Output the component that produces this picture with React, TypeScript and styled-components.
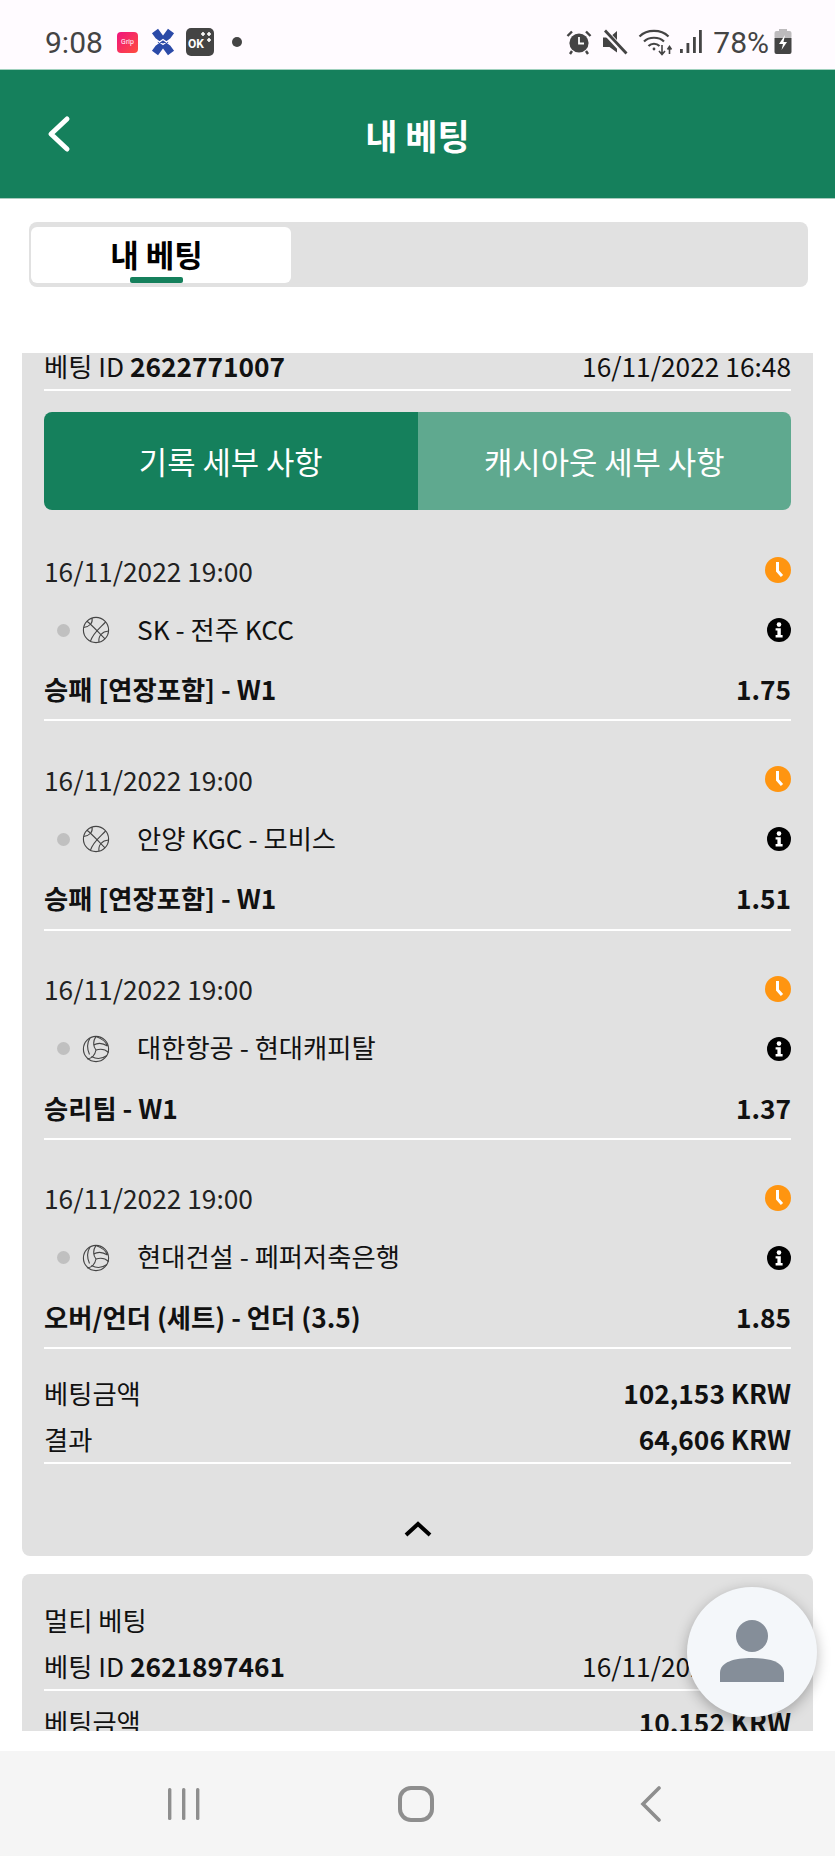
import React from 'react';
import styled, { createGlobalStyle } from 'styled-components';

const GlobalStyle = createGlobalStyle`
    html, body {
        margin: 0;
        padding: 0;
        background: #fff;
    }
    body {
        font-family: 'Noto Sans CJK KR', 'Noto Sans', sans-serif;
        color: #111;
    }
`;

const GREEN = '#15805c';

interface Selection {
    date: string;
    sport: 'basketball' | 'volleyball';
    teams: string;
    market: string;
    odds: string;
}

const SELECTIONS: Selection[] = [
    { date: '16/11/2022 19:00', sport: 'basketball', teams: 'SK - 전주 KCC', market: '승패 [연장포함] - W1', odds: '1.75' },
    { date: '16/11/2022 19:00', sport: 'basketball', teams: '안양 KGC - 모비스', market: '승패 [연장포함] - W1', odds: '1.51' },
    { date: '16/11/2022 19:00', sport: 'volleyball', teams: '대한항공 - 현대캐피탈', market: '승리팀 - W1', odds: '1.37' },
    { date: '16/11/2022 19:00', sport: 'volleyball', teams: '현대건설 - 페퍼저축은행', market: '오버/언더 (세트) - 언더 (3.5)', odds: '1.85' },
];

const Basketball = () => (
    <svg width="28" height="28" viewBox="0 0 28 28" fill="none" stroke="#444" strokeWidth="1.1">
        <circle cx="14" cy="14" r="12.6" />
        <path d="M5 5.2 C11 10 17 17 23 22.8" />
        <path d="M23.6 6 C18 12 11 17 8.5 25.2" />
        <path d="M10 2 C11 7 8 10.5 1.6 11.5" />
        <path d="M26.6 15 C20 15.5 16 20 17 26.4" />
    </svg>
);

const Volleyball = () => (
    <svg width="28" height="28" viewBox="0 0 28 28" fill="none" stroke="#444" strokeWidth="1.1">
        <circle cx="14" cy="14" r="12.6" />
        <path d="M14 15 C11 11 11 6 14 1.4" />
        <path d="M14 15 C19 13.5 23.5 14.5 26.6 17.5" />
        <path d="M14 15 C13 20 9.5 23.5 5 24" />
        <path d="M8 3 C5 8 5 14 7.5 19.5" />
        <path d="M14 1.4 C19 3 24 7 25.5 11" />
        <path d="M11.5 10 C16 7.5 21 8 25.5 11" />
        <path d="M25 20.5 C20 24 14 24 9.5 21.5" />
    </svg>
);

const ClockBadge = () => (
    <svg width="26" height="26" viewBox="0 0 26 26">
        <circle cx="13" cy="13" r="13" fill="#ff9510" />
        <path d="M12.5 5 V14 L17 19" fill="none" stroke="#fff" strokeWidth="3" />
    </svg>
);

const InfoBadge = () => (
    <svg width="24" height="24" viewBox="0 0 24 24">
        <circle cx="12" cy="12" r="12" fill="#000" />
        <circle cx="12" cy="6.6" r="2.3" fill="#fff" />
        <path d="M8.6 10.2 H13.8 V17 H15.6 V19.4 H8.6 V17 H10.4 V12.6 H8.6 Z" fill="#fff" />
    </svg>
);

const Alarm = () => (
    <svg width="26" height="26" viewBox="0 0 26 26">
        <circle cx="13" cy="14" r="9.6" fill="#444" />
        <path d="M1.5 7 L6 2.5 M24.5 7 L20 2.5 M6 22 L4 25 M20 22 L22 25" stroke="#444" strokeWidth="2.4" fill="none" />
        <path d="M13 8 V14.5 H18" stroke="#fff" strokeWidth="1.8" fill="none" />
    </svg>
);

const Mute = () => (
    <svg width="26" height="26" viewBox="0 0 26 26">
        <path d="M1 8.5 H7.5 L15 2 V23.5 L7.5 18 H1 Z" fill="#444" />
        <path d="M2 1.5 L25 26" stroke="#fffbff" strokeWidth="6" />
        <path d="M3 1.5 L24.5 24.5" stroke="#444" strokeWidth="2.8" />
    </svg>
);

const Wifi = () => (
    <svg width="36" height="28" viewBox="0 0 36 28" fill="none" stroke="#444" strokeWidth="2.2">
        <path d="M1.5 8.5 C9 1 23 1 30.5 8.5" />
        <path d="M6 13.5 C11 8.5 21 8.5 26 13.5" />
        <path d="M10.5 18 C13.5 15 18.5 15 21.5 18" />
        <circle cx="16" cy="21" r="1.4" fill="#444" stroke="none" />
        <path d="M24 17 V26 M21 23 L24 26.5 L27 23 M31.5 26 V19 M29.5 21.5 L31.5 18.5 L33.5 21.5" strokeWidth="1.6" />
    </svg>
);

const Signal = () => (
    <svg width="24" height="26" viewBox="0 0 24 26" fill="#444">
        <rect x="1" y="20" width="2.8" height="4" />
        <rect x="7.5" y="14" width="2.8" height="10" />
        <rect x="14" y="8" width="2.8" height="16" />
        <rect x="20" y="1" width="2.8" height="23" />
    </svg>
);

const Battery = () => (
    <svg width="18" height="26" viewBox="0 0 18 26">
        <rect x="5" y="0" width="8" height="3" fill="#bdbbbd" />
        <rect x="0.5" y="2" width="17" height="8" rx="2" fill="#bdbbbd" />
        <path d="M0.5 9 H17.5 V23 Q17.5 25 15.5 25 H2.5 Q0.5 25 0.5 23 Z" fill="#444" />
        <path d="M11 6 L5 15 H9 L7.5 21 L13 13 H9.5 Z" fill="#fff" />
    </svg>
);

const App: React.FC = () => {
    return (
        <Page>
            <GlobalStyle />
            <StatusBar>
                <StatusSide>
                    <Clock>9:08</Clock>
                    <GripLogo>Grip</GripLogo>
                    <AppMark>
                        <svg width="24" height="28" viewBox="0 0 24 28">
                            <path d="M4 3 L20 25 M20 3 L4 25" stroke="#2b4aa8" strokeWidth="7.5" fill="none" />
                            <path d="M4.5 11 L12 16.5 L19.5 11 M4.5 17 L12 11.5 L19.5 17" stroke="#fffbff" strokeWidth="1.3" fill="none" />
                        </svg>
                    </AppMark>
                    <OkLogo>
                        OK
                        <svg width="12" height="12" viewBox="0 0 12 12" stroke="#fff" strokeWidth="1.6">
                            <path d="M3 1 V5 M1 3 H5 M9 1 V5 M7 3 H11 M9 7 V11 M7 9 H11" />
                        </svg>
                    </OkLogo>
                    <NotifyDot />
                </StatusSide>
                <StatusSide>
                    <Alarm />
                    <IconGap $gap={10}><Mute /></IconGap>
                    <IconGap $gap={10}><Wifi /></IconGap>
                    <IconGap $gap={5}><Signal /></IconGap>
                    <Percent>78%</Percent>
                    <IconGap $gap={5}><Battery /></IconGap>
                </StatusSide>
            </StatusBar>

            <Header>
                <BackButton>
                    <svg width="26" height="38" viewBox="0 0 26 38" fill="none" stroke="#fff" strokeWidth="5" strokeLinecap="round" strokeLinejoin="round">
                        <path d="M21 4 L5 19 L21 34" />
                    </svg>
                </BackButton>
                <Title>내 베팅</Title>
            </Header>

            <TabArea>
                <TabBar>
                    <ActiveTab>내 베팅</ActiveTab>
                </TabBar>
            </TabArea>

            <Scroller>
                <Card $offset={-32}>
                    <InfoRow $ruled>
                        <span>베팅 ID <strong>2622771007</strong></span>
                        <span>16/11/2022 16:48</span>
                    </InfoRow>
                    <DetailTabs>
                        <DetailTab $active>기록 세부 사항</DetailTab>
                        <DetailTab>캐시아웃 세부 사항</DetailTab>
                    </DetailTabs>
                    <ItemList>
                        {SELECTIONS.map((item) => (
                            <Item key={item.teams}>
                                <DateRow>
                                    <span>{item.date}</span>
                                    <ClockBadge />
                                </DateRow>
                                <TeamRow>
                                    <LiveDot />
                                    {item.sport === 'basketball' ? <Basketball /> : <Volleyball />}
                                    <TeamName>{item.teams}</TeamName>
                                    <InfoBadge />
                                </TeamRow>
                                <MarketRow>
                                    <span>{item.market}</span>
                                    <span>{item.odds}</span>
                                </MarketRow>
                            </Item>
                        ))}
                    </ItemList>
                    <Summary>
                        <InfoRow>
                            <span>베팅금액</span>
                            <strong>102,153 KRW</strong>
                        </InfoRow>
                        <InfoRow $ruled>
                            <span>결과</span>
                            <strong>64,606 KRW</strong>
                        </InfoRow>
                    </Summary>
                    <Collapse>
                        <svg width="30" height="18" viewBox="0 0 30 18" fill="none" stroke="#000" strokeWidth="4">
                            <path d="M3 15 L15 4 L27 15" />
                        </svg>
                    </Collapse>
                </Card>
                <Card $offset={18}>
                    <InfoRow>멀티 베팅</InfoRow>
                    <InfoRow $ruled>
                        <span>베팅 ID <strong>2621897461</strong></span>
                        <span>16/11/2022 12:31</span>
                    </InfoRow>
                    <SecondAmount>
                        <span>베팅금액</span>
                        <strong>10,152 KRW</strong>
                    </SecondAmount>
                </Card>
            </Scroller>

            <NavBar>
                <svg width="34" height="34" viewBox="0 0 34 34" fill="#8e8e8e">
                    <rect x="1" y="1" width="3.4" height="32" rx="1.5" />
                    <rect x="15" y="1" width="3.4" height="32" rx="1.5" />
                    <rect x="29" y="1" width="3.4" height="32" rx="1.5" />
                </svg>
                <HomeSlot>
                    <svg width="36" height="36" viewBox="0 0 36 36" fill="none" stroke="#8e8e8e" strokeWidth="4">
                        <rect x="2" y="2" width="32" height="32" rx="11" />
                    </svg>
                </HomeSlot>
                <svg width="22" height="36" viewBox="0 0 22 36" fill="none" stroke="#8e8e8e" strokeWidth="3.6" strokeLinecap="round">
                    <path d="M19 2 L3 18 L19 34" />
                </svg>
            </NavBar>

            <Fab>
                <svg width="64" height="64" viewBox="0 0 64 64" fill="#858e99">
                    <ellipse cx="32" cy="16" rx="16" ry="16" />
                    <path d="M0 62 V53 C0 42 14 38 32 38 C50 38 64 42 64 53 V62 Z" />
                </svg>
            </Fab>
        </Page>
    );
};

const Page = styled.div`
    position: relative;
    display: flex;
    flex-direction: column;
    width: 835px;
    height: 1856px;
    overflow: hidden;
    background: #fff;
`;

const StatusBar = styled.div`
    display: flex;
    justify-content: space-between;
    align-items: center;
    height: 69px;
    box-sizing: border-box;
    padding: 15px 43px 0 45px;
    background: #fffbff;
    color: #444;
`;

const StatusSide = styled.div`
    display: flex;
    align-items: center;
`;

const Clock = styled.span`
    font-family: Roboto, sans-serif;
    font-size: 30px;
    width: 57px;
`;

const GripLogo = styled.span`
    display: flex;
    align-items: center;
    justify-content: center;
    width: 21px;
    height: 21px;
    margin-left: 15px;
    border-radius: 4px;
    background: linear-gradient(135deg, #f0147f, #ff4d3d);
    color: #fff;
    font-family: Roboto, sans-serif;
    font-size: 7px;
`;

const AppMark = styled.span`
    display: flex;
    margin-left: 13px;
`;

const OkLogo = styled.span`
    position: relative;
    display: flex;
    align-items: flex-end;
    justify-content: flex-start;
    width: 28px;
    height: 28px;
    box-sizing: border-box;
    margin-left: 11px;
    padding: 0 0 5px 2px;
    border-radius: 5px;
    background: #444;
    color: #fff;
    font-family: Roboto, sans-serif;
    font-size: 12px;
    font-weight: 700;
    line-height: 13px;

    svg {
        position: absolute;
        top: 3px;
        right: 2px;
    }
`;

const NotifyDot = styled.span`
    width: 10px;
    height: 10px;
    margin-left: 18px;
    border-radius: 50%;
    background: #444;
`;

const IconGap = styled.span<{ $gap: number }>`
    display: flex;
    margin-left: ${(p) => p.$gap}px;
`;

const Percent = styled.span`
    margin-left: 10px;
    font-family: Roboto, sans-serif;
    font-size: 30px;
`;

const Header = styled.header`
    position: relative;
    display: flex;
    align-items: center;
    justify-content: center;
    height: 130px;
    flex: none;
    border-top: 1px solid #9fd0bd;
    border-bottom: 1px solid #a9cbbe;
    box-sizing: border-box;
    background: ${GREEN};
`;

const BackButton = styled.div`
    position: absolute;
    left: 46px;
    top: 45px;
    display: flex;
`;

const Title = styled.h1`
    margin: 0;
    color: #fff;
    font-size: 35px;
    font-weight: 700;
`;

const TabArea = styled.div`
    flex: none;
    height: 154px;
    box-sizing: border-box;
    padding: 23px 27px 0 29px;
`;

const TabBar = styled.div`
    display: flex;
    height: 65px;
    box-sizing: border-box;
    padding: 5px 2px 4px;
    border-radius: 8px;
    background: #e1e1e1;
`;

const ActiveTab = styled.div`
    position: relative;
    width: 260px;
    display: flex;
    align-items: center;
    justify-content: center;
    padding: 0 9px 4px 0;
    box-sizing: border-box;
    border-radius: 6px;
    background: #fff;
    color: #000;
    font-size: 31px;
    font-weight: 700;

    &::after {
        content: '';
        position: absolute;
        left: 99px;
        bottom: 0;
        width: 53px;
        height: 6px;
        border-radius: 2px;
        background: ${GREEN};
    }
`;

const Scroller = styled.div`
    height: 1378px;
    flex: none;
    overflow: hidden;
    padding: 0 22px;
`;

const Card = styled.section<{ $offset: number }>`
    margin-top: ${(p) => p.$offset}px;
    padding: 23px 22px 0;
    border-radius: 8px;
    background: #e1e1e1;
    font-size: 26.3px;
`;

const InfoRow = styled.div<{ $ruled?: boolean }>`
    display: flex;
    justify-content: space-between;
    align-items: center;
    height: 47px;
    box-sizing: border-box;
    border-bottom: ${(p) => (p.$ruled ? '2px solid #fff' : 'none')};
    padding-bottom: 3px;
    strong {
        font-weight: 700;
    }
`;

const DetailTabs = styled.div`
    display: flex;
    height: 98px;
    margin-top: 21px;
    border-radius: 8px;
    overflow: hidden;
`;

const DetailTab = styled.div<{ $active?: boolean }>`
    flex: 1;
    display: flex;
    align-items: center;
    justify-content: center;
    padding-bottom: 2px;
    background: ${(p) => (p.$active ? GREEN : '#5fa98f')};
    color: #fff;
    font-size: 30.8px;
`;

const ItemList = styled.div`
    margin-top: 2px;
`;

const Item = styled.div`
    height: 209.3px;
    box-sizing: border-box;
    padding-top: 30px;
    border-bottom: 2px solid #fff;
`;

const DateRow = styled.div`
    display: flex;
    justify-content: space-between;
    align-items: center;
    height: 58px;
    padding-bottom: 2px;
    box-sizing: border-box;
    color: #222;
`;

const TeamRow = styled.div`
    display: flex;
    align-items: center;
    height: 60px;
`;

const LiveDot = styled.span`
    width: 13px;
    height: 13px;
    margin: 0 12px 0 13px;
    border-radius: 50%;
    background: #c0c0c0;
`;

const TeamName = styled.span`
    flex: 1;
    margin-left: 27px;
    padding-bottom: 4px;
`;

const MarketRow = styled.div`
    display: flex;
    justify-content: space-between;
    align-items: center;
    height: 59px;
    padding-bottom: 2px;
    box-sizing: border-box;
    font-weight: 700;
`;

const Summary = styled.div`
    padding-top: 21px;
`;

const Collapse = styled.div`
    display: flex;
    align-items: center;
    justify-content: center;
    height: 92px;
    padding-top: 38px;
    box-sizing: border-box;
`;

const SecondAmount = styled(InfoRow)`
    margin-top: 8px;
`;

const NavBar = styled.nav`
    flex: 1;
    display: flex;
    justify-content: space-between;
    align-items: center;
    margin-top: 20px;
    padding: 0 173px 0 167px;
    background: #f5f5f5;
`;

const HomeSlot = styled.span`
    display: flex;
    margin-right: 9px;
`;

const Fab = styled.div`
    position: absolute;
    left: 687px;
    top: 1587px;
    display: flex;
    align-items: center;
    justify-content: center;
    width: 130px;
    height: 130px;
    border-radius: 50%;
    background: #f4f7fa;
    box-shadow: 0 4px 14px rgba(0, 0, 0, 0.28);
`;

export default App;
